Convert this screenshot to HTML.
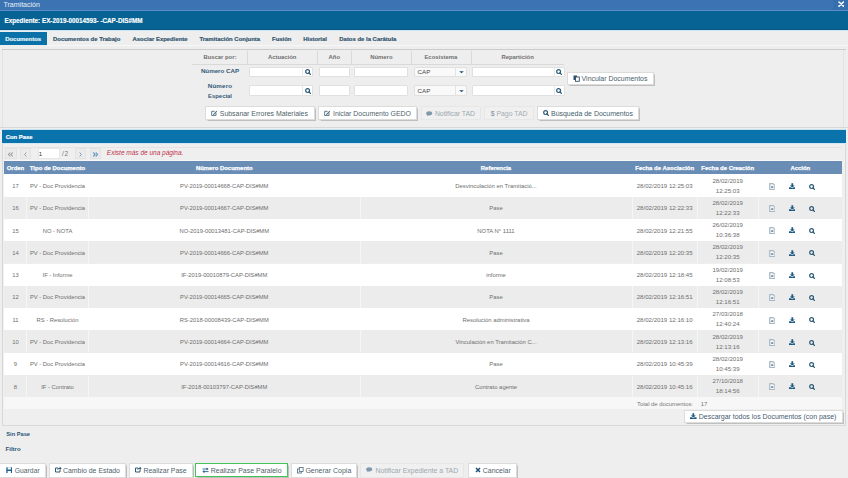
<!DOCTYPE html>
<html><head><meta charset="utf-8"><title>Tramitación</title>
<style>
*{margin:0;padding:0;box-sizing:border-box}
html,body{width:848px;height:478px;overflow:hidden}
body{background:#eeeeee;font-family:"Liberation Sans", sans-serif;position:relative}
.a{position:absolute}
.t{position:absolute;white-space:nowrap}
svg{display:block}
</style></head><body>
<div id="root" style="position:absolute;left:0;top:0;width:848px;height:478px;overflow:hidden">
<div class="a" style="left:0.00px;top:0.00px;width:848.00px;height:9.70px;background:#3b73b3"></div>
<div class="a" style="left:0.00px;top:9.70px;width:848.00px;height:1.20px;background:#5b8ec6"></div>
<div class="t" style="left:3.50px;top:-5.40px;width:600px;height:20px;line-height:20px;font-size:7px;color:#e8f0f8;text-align:left;">Tramitación</div>
<div class="a" style="left:833.00px;top:0.00px;width:15.00px;height:9.80px;background:#376ead"></div>
<svg class="a" style="left:837.60px;top:1.10px" width="6.5" height="6.2" viewBox="0 0 6.5 6.2"><path d="M1 1L5.5 5.2M5.5 1L1 5.2" stroke="#fff" stroke-width="1.6" stroke-linecap="round"/></svg>
<div class="a" style="left:0.00px;top:10.90px;width:848.00px;height:18.80px;background:#066394"></div>
<div class="a" style="left:0.00px;top:28.90px;width:848.00px;height:0.80px;background:#055683"></div>
<div class="a" style="left:0.00px;top:29.70px;width:848.00px;height:1.50px;background:#d3e8f4"></div>
<div class="t" style="left:4.50px;top:11.30px;width:600px;height:20px;line-height:20px;font-size:6.3px;color:#ffffff;text-align:left;font-weight:700;-webkit-text-stroke:0.15px #fff;">Expediente: EX-2019-00014593- -CAP-DIS#MM</div>
<div class="a" style="left:0.00px;top:32.00px;width:47.20px;height:13.00px;background:#0b72a9"></div>
<div class="t" style="left:5.20px;top:29.10px;width:600px;height:20px;line-height:20px;font-size:5.95px;color:#e6f2f8;text-align:left;font-weight:700;-webkit-text-stroke:0.2px #e6f2f8;">Documentos</div>
<div class="t" style="left:53.00px;top:29.10px;width:600px;height:20px;line-height:20px;font-size:5.95px;color:#33566e;text-align:left;font-weight:700;-webkit-text-stroke:0.2px #33566e;">Documentos de Trabajo</div>
<div class="t" style="left:132.50px;top:29.10px;width:600px;height:20px;line-height:20px;font-size:5.95px;color:#33566e;text-align:left;font-weight:700;-webkit-text-stroke:0.2px #33566e;">Asociar Expediente</div>
<div class="t" style="left:199.40px;top:29.10px;width:600px;height:20px;line-height:20px;font-size:5.95px;color:#33566e;text-align:left;font-weight:700;-webkit-text-stroke:0.2px #33566e;">Tramitación Conjunta</div>
<div class="t" style="left:272.00px;top:29.10px;width:600px;height:20px;line-height:20px;font-size:5.95px;color:#33566e;text-align:left;font-weight:700;-webkit-text-stroke:0.2px #33566e;">Fusión</div>
<div class="t" style="left:303.20px;top:29.10px;width:600px;height:20px;line-height:20px;font-size:5.95px;color:#33566e;text-align:left;font-weight:700;-webkit-text-stroke:0.2px #33566e;">Historial</div>
<div class="t" style="left:339.30px;top:29.10px;width:600px;height:20px;line-height:20px;font-size:5.95px;color:#33566e;text-align:left;font-weight:700;-webkit-text-stroke:0.2px #33566e;">Datos de la Carátula</div>
<div class="a" style="left:47.20px;top:44.50px;width:800.80px;height:0.80px;background:#f7f7f7"></div>
<div class="a" style="left:2.00px;top:48.60px;width:843.50px;height:1.20px;background:#cbcbcb"></div>
<div class="a" style="left:1.60px;top:49.80px;width:0.80px;height:77.50px;background:#e3e3e3"></div>
<div class="a" style="left:843.00px;top:49.80px;width:0.80px;height:77.50px;background:#e3e3e3"></div>
<div class="t" style="left:-80.10px;top:47.30px;width:600px;height:20px;line-height:20px;font-size:5.9px;color:#6f6f6f;text-align:center;font-weight:700;">Buscar por:</div>
<div class="t" style="left:-17.80px;top:47.30px;width:600px;height:20px;line-height:20px;font-size:5.9px;color:#6f6f6f;text-align:center;font-weight:700;">Actuación</div>
<div class="t" style="left:34.30px;top:47.30px;width:600px;height:20px;line-height:20px;font-size:5.9px;color:#6f6f6f;text-align:center;font-weight:700;">Año</div>
<div class="t" style="left:81.40px;top:47.30px;width:600px;height:20px;line-height:20px;font-size:5.9px;color:#6f6f6f;text-align:center;font-weight:700;">Número</div>
<div class="t" style="left:140.80px;top:47.30px;width:600px;height:20px;line-height:20px;font-size:5.9px;color:#6f6f6f;text-align:center;font-weight:700;">Ecosistema</div>
<div class="t" style="left:217.60px;top:47.30px;width:600px;height:20px;line-height:20px;font-size:5.9px;color:#6f6f6f;text-align:center;font-weight:700;">Repartición</div>
<div class="a" style="left:246.90px;top:50.50px;width:0.80px;height:13.50px;background:#d9d9d9"></div>
<div class="a" style="left:316.60px;top:50.50px;width:0.80px;height:13.50px;background:#d9d9d9"></div>
<div class="a" style="left:351.30px;top:50.50px;width:0.80px;height:13.50px;background:#d9d9d9"></div>
<div class="a" style="left:411.40px;top:50.50px;width:0.80px;height:13.50px;background:#d9d9d9"></div>
<div class="a" style="left:470.50px;top:50.50px;width:0.80px;height:13.50px;background:#d9d9d9"></div>
<div class="a" style="left:192.40px;top:63.60px;width:372.00px;height:0.80px;background:#d9d9d9"></div>
<div class="t" style="left:-80.00px;top:61.40px;width:600px;height:20px;line-height:20px;font-size:6.2px;color:#335a78;text-align:center;font-weight:700;">Número CAP</div>
<div class="t" style="left:-80.00px;top:75.90px;width:600px;height:20px;line-height:20px;font-size:6.25px;color:#335a78;text-align:center;font-weight:700;letter-spacing:0.15px;">Número</div>
<div class="t" style="left:-80.00px;top:85.90px;width:600px;height:20px;line-height:20px;font-size:5.9px;color:#335a78;text-align:center;font-weight:700;">Especial</div>
<div class="a" style="left:249.20px;top:66.60px;width:64.10px;height:10.70px;background:#fff;border:0.8px solid #e0e0e0;border-radius:1px"></div>
<div class="a" style="left:302.20px;top:66.90px;width:0.80px;height:10.10px;background:#e8e8e8"></div>
<svg class="a" style="left:304.80px;top:68.95px" width="6.5" height="6.5" viewBox="0 0 6.5 6.5"><circle cx="2.6" cy="2.6" r="1.9" fill="none" stroke="#2c5a76" stroke-width="1.2"/><path d="M4 4L5.4 5.4" stroke="#2c5a76" stroke-width="1.3" stroke-linecap="round"/></svg>
<div class="a" style="left:319.40px;top:66.60px;width:31.00px;height:10.70px;background:#fff;border:0.8px solid #e0e0e0;border-radius:1px"></div>
<div class="a" style="left:354.30px;top:66.60px;width:53.30px;height:10.70px;background:#fff;border:0.8px solid #e0e0e0;border-radius:1px"></div>
<div class="a" style="left:414.40px;top:66.60px;width:52.30px;height:10.70px;background:#f9f9f9;border:0.8px solid #e0e0e0;border-radius:1px"></div>
<div class="a" style="left:454.60px;top:66.90px;width:0.80px;height:10.10px;background:#e4e4e4"></div>
<div class="t" style="left:417.60px;top:61.95px;width:600px;height:20px;line-height:20px;font-size:6.2px;color:#444;text-align:left;">CAP</div>
<svg class="a" style="left:458.60px;top:70.95px" width="5" height="2.6" viewBox="0 0 5 2.6"><path d="M0.2 0.2H4.8L2.5 2.2Z" fill="#1f4f6e"/></svg>
<div class="a" style="left:472.20px;top:66.60px;width:92.40px;height:10.70px;background:#fff;border:0.8px solid #e0e0e0;border-radius:1px"></div>
<div class="a" style="left:553.50px;top:66.90px;width:0.80px;height:10.10px;background:#e8e8e8"></div>
<svg class="a" style="left:556.00px;top:68.95px" width="6.5" height="6.5" viewBox="0 0 6.5 6.5"><circle cx="2.6" cy="2.6" r="1.9" fill="none" stroke="#2c5a76" stroke-width="1.2"/><path d="M4 4L5.4 5.4" stroke="#2c5a76" stroke-width="1.3" stroke-linecap="round"/></svg>
<div class="a" style="left:249.20px;top:85.40px;width:64.10px;height:10.90px;background:#fff;border:0.8px solid #e0e0e0;border-radius:1px"></div>
<div class="a" style="left:302.20px;top:85.70px;width:0.80px;height:10.30px;background:#e8e8e8"></div>
<svg class="a" style="left:304.80px;top:87.85px" width="6.5" height="6.5" viewBox="0 0 6.5 6.5"><circle cx="2.6" cy="2.6" r="1.9" fill="none" stroke="#2c5a76" stroke-width="1.2"/><path d="M4 4L5.4 5.4" stroke="#2c5a76" stroke-width="1.3" stroke-linecap="round"/></svg>
<div class="a" style="left:319.40px;top:85.40px;width:31.00px;height:10.90px;background:#fff;border:0.8px solid #e0e0e0;border-radius:1px"></div>
<div class="a" style="left:354.30px;top:85.40px;width:53.30px;height:10.90px;background:#fff;border:0.8px solid #e0e0e0;border-radius:1px"></div>
<div class="a" style="left:414.40px;top:85.40px;width:52.30px;height:10.90px;background:#f9f9f9;border:0.8px solid #e0e0e0;border-radius:1px"></div>
<div class="a" style="left:454.60px;top:85.70px;width:0.80px;height:10.30px;background:#e4e4e4"></div>
<div class="t" style="left:417.60px;top:80.85px;width:600px;height:20px;line-height:20px;font-size:6.2px;color:#444;text-align:left;">CAP</div>
<svg class="a" style="left:458.60px;top:89.85px" width="5" height="2.6" viewBox="0 0 5 2.6"><path d="M0.2 0.2H4.8L2.5 2.2Z" fill="#1f4f6e"/></svg>
<div class="a" style="left:472.20px;top:85.40px;width:92.40px;height:10.90px;background:#fff;border:0.8px solid #e0e0e0;border-radius:1px"></div>
<div class="a" style="left:553.50px;top:85.70px;width:0.80px;height:10.30px;background:#e8e8e8"></div>
<svg class="a" style="left:556.00px;top:87.85px" width="6.5" height="6.5" viewBox="0 0 6.5 6.5"><circle cx="2.6" cy="2.6" r="1.9" fill="none" stroke="#2c5a76" stroke-width="1.2"/><path d="M4 4L5.4 5.4" stroke="#2c5a76" stroke-width="1.3" stroke-linecap="round"/></svg>
<div class="a" style="left:204.50px;top:106.40px;width:110.30px;height:14.00px;background:#fff;border:0.7px solid #dcdcdc;box-shadow:0.5px 0.8px 0.9px rgba(0,0,0,0.2)"></div>
<svg class="a" style="left:211.20px;top:110.30px" width="6.5" height="6" viewBox="0 0 6.5 6"><path d="M0.7 1.3H3.6M0.7 1.3V5.6H5V3" fill="none" stroke="#4a6a80" stroke-width="0.9"/><path d="M2.3 4L5.5 0.8L6.2 1.5L3 4.7L2.1 4.9Z" fill="#4a6a80"/></svg>
<div class="t" style="left:219.80px;top:104.00px;width:600px;height:20px;line-height:20px;font-size:6.93px;color:#4e5f6b;text-align:left;">Subsanar Errores Materiales</div>
<div class="a" style="left:317.50px;top:106.40px;width:99.80px;height:14.00px;background:#fff;border:0.7px solid #dcdcdc;box-shadow:0.5px 0.8px 0.9px rgba(0,0,0,0.2)"></div>
<svg class="a" style="left:323.50px;top:110.30px" width="6.5" height="6" viewBox="0 0 6.5 6"><path d="M0.7 1.3H3.6M0.7 1.3V5.6H5V3" fill="none" stroke="#4a6a80" stroke-width="0.9"/><path d="M2.3 4L5.5 0.8L6.2 1.5L3 4.7L2.1 4.9Z" fill="#4a6a80"/></svg>
<div class="t" style="left:333.00px;top:104.00px;width:600px;height:20px;line-height:20px;font-size:6.91px;color:#4e5f6b;text-align:left;">Iniciar Documento GEDO</div>
<div class="a" style="left:420.50px;top:106.40px;width:60.30px;height:14.00px;background:#f0f0f0;border:0.7px solid #e7e7e7"></div>
<svg class="a" style="left:426.00px;top:110.80px" width="6.5" height="5.5" viewBox="0 0 6.5 5.5"><ellipse cx="3.2" cy="2.3" rx="3" ry="2.1" fill="#7f98aa"/><path d="M0.8 5.3L1.8 3.4L3 4Z" fill="#7f98aa"/></svg>
<div class="t" style="left:434.90px;top:104.00px;width:600px;height:20px;line-height:20px;font-size:6.87px;color:#9ca8b0;text-align:left;">Notificar TAD</div>
<div class="a" style="left:484.20px;top:106.40px;width:49.50px;height:14.00px;background:#f0f0f0;border:0.7px solid #e7e7e7"></div>
<div class="t" style="left:490.70px;top:104.00px;width:600px;height:20px;line-height:20px;font-size:6.87px;color:#a2adb4;text-align:left;"><span style="color:#7d8c96">$</span> Pago TAD</div>
<div class="a" style="left:536.50px;top:106.40px;width:102.80px;height:14.00px;background:#fff;border:0.7px solid #dcdcdc;box-shadow:0.5px 0.8px 0.9px rgba(0,0,0,0.2)"></div>
<svg class="a" style="left:543.00px;top:110.20px" width="6.5" height="6.5" viewBox="0 0 6.5 6.5"><circle cx="2.6" cy="2.6" r="1.9" fill="none" stroke="#2c5a76" stroke-width="1.2"/><path d="M4 4L5.4 5.4" stroke="#2c5a76" stroke-width="1.3" stroke-linecap="round"/></svg>
<div class="t" style="left:551.00px;top:104.00px;width:600px;height:20px;line-height:20px;font-size:6.96px;color:#435d6d;text-align:left;">Búsqueda de Documentos</div>
<div class="a" style="left:566.50px;top:71.90px;width:87.10px;height:13.20px;background:#fff;border:0.7px solid #dcdcdc;box-shadow:0.5px 0.8px 0.9px rgba(0,0,0,0.2)"></div>
<svg class="a" style="left:572.70px;top:75.30px" width="7" height="6.5" viewBox="0 0 7 6.5"><rect x="0.5" y="0.5" width="3.5" height="4.5" fill="#2e4f69"/><rect x="2.5" y="2" width="3.8" height="4.3" fill="#fff" stroke="#2e4f69" stroke-width="0.9"/></svg>
<div class="t" style="left:581.60px;top:69.00px;width:600px;height:20px;line-height:20px;font-size:6.94px;color:#475d6c;text-align:left;">Vincular Documentos</div>
<div class="a" style="left:0.00px;top:127.30px;width:848.00px;height:1.00px;background:#d8d8d8"></div>
<div class="a" style="left:2.00px;top:128.60px;width:844.00px;height:1.00px;background:#c5e1ef"></div>
<div class="a" style="left:1.85px;top:129.60px;width:844.15px;height:13.00px;background:#0a73ab"></div>
<div class="t" style="left:5.70px;top:126.80px;width:600px;height:20px;line-height:20px;font-size:5.92px;color:#ffffff;text-align:left;font-weight:700;-webkit-text-stroke:0.2px #fff;">Con Pase</div>
<div class="a" style="left:1.85px;top:142.60px;width:844.15px;height:283.30px;background:#efefef;border:0.8px solid #d8d8d8;border-top:none"></div>
<div class="a" style="left:1.85px;top:142.60px;width:844.15px;height:1.20px;background:#d2e7f2"></div>
<div class="a" style="left:4.40px;top:146.60px;width:838.10px;height:0.80px;background:#e3e3e3"></div>
<div class="a" style="left:4.40px;top:160.20px;width:838.10px;height:0.90px;background:#f8f8f8"></div>
<div class="a" style="left:4.50px;top:147.90px;width:12.10px;height:11.20px;background:#ebebeb;border:0.6px solid #e2e2e2"></div>
<svg class="a" style="left:7.05px;top:150.50px" width="7" height="7" viewBox="0 0 7 7"><path d="M3.3 1.5L1.5 3.5L3.3 5.5M5.8 1.5L4 3.5L5.8 5.5" fill="none" stroke="#9a9a9a" stroke-width="1.1"/></svg>
<div class="a" style="left:19.50px;top:147.90px;width:11.60px;height:11.20px;background:#ebebeb;border:0.6px solid #e2e2e2"></div>
<svg class="a" style="left:21.80px;top:150.50px" width="7" height="7" viewBox="0 0 7 7"><path d="M4.3 1.5L2.6 3.5L4.3 5.5" fill="none" stroke="#a0a0a0" stroke-width="1.0"/></svg>
<div class="a" style="left:37.60px;top:147.90px;width:22.10px;height:11.20px;background:#fff;border:0.6px solid #e6e6e6"></div>
<div class="t" style="left:38.80px;top:143.70px;width:600px;height:20px;line-height:20px;font-size:6px;color:#333;text-align:left;">1</div>
<div class="t" style="left:61.90px;top:143.70px;width:600px;height:20px;line-height:20px;font-size:6.6px;color:#777;text-align:left;letter-spacing:0.8px;">/2</div>
<div class="a" style="left:74.60px;top:147.90px;width:11.60px;height:11.20px;background:#ebebeb;border:0.6px solid #e2e2e2"></div>
<svg class="a" style="left:76.90px;top:150.50px" width="7" height="7" viewBox="0 0 7 7"><path d="M2.7 1.5L4.4 3.5L2.7 5.5" fill="none" stroke="#7a9fc4" stroke-width="1.0"/></svg>
<div class="a" style="left:89.50px;top:147.90px;width:11.70px;height:11.20px;background:#ebebeb;border:0.6px solid #e2e2e2"></div>
<svg class="a" style="left:91.85px;top:150.50px" width="7" height="7" viewBox="0 0 7 7"><path d="M1.2 1.5L3 3.5L1.2 5.5M3.7 1.5L5.5 3.5L3.7 5.5" fill="none" stroke="#6f9ac8" stroke-width="1.2"/></svg>
<div class="t" style="left:106.80px;top:143.20px;width:600px;height:20px;line-height:20px;font-size:6.5px;color:#c2334d;text-align:left;font-style:italic;">Existe más de una página.</div>
<div class="a" style="left:4.40px;top:161.10px;width:838.10px;height:13.20px;background:#6a8db5"></div>
<div class="t" style="left:-284.55px;top:158.10px;width:600px;height:20px;line-height:20px;font-size:5.95px;color:#ffffff;text-align:center;font-weight:700;-webkit-text-stroke:0.25px #ffffff;">Orden</div>
<div class="t" style="left:-242.50px;top:158.10px;width:600px;height:20px;line-height:20px;font-size:5.95px;color:#ffffff;text-align:center;font-weight:700;-webkit-text-stroke:0.25px #ffffff;">Tipo de Documento</div>
<div class="t" style="left:-75.75px;top:158.10px;width:600px;height:20px;line-height:20px;font-size:5.95px;color:#ffffff;text-align:center;font-weight:700;-webkit-text-stroke:0.25px #ffffff;">Número Documento</div>
<div class="t" style="left:196.00px;top:158.10px;width:600px;height:20px;line-height:20px;font-size:5.95px;color:#ffffff;text-align:center;font-weight:700;-webkit-text-stroke:0.25px #ffffff;">Referencia</div>
<div class="t" style="left:364.70px;top:158.10px;width:600px;height:20px;line-height:20px;font-size:5.95px;color:#ffffff;text-align:center;font-weight:700;-webkit-text-stroke:0.25px #ffffff;">Fecha de Asociación</div>
<div class="t" style="left:427.70px;top:158.10px;width:600px;height:20px;line-height:20px;font-size:5.95px;color:#ffffff;text-align:center;font-weight:700;-webkit-text-stroke:0.25px #ffffff;">Fecha de Creación</div>
<div class="t" style="left:500.35px;top:158.10px;width:600px;height:20px;line-height:20px;font-size:5.95px;color:#ffffff;text-align:center;font-weight:700;-webkit-text-stroke:0.25px #ffffff;">Acción</div>
<div class="a" style="left:4.40px;top:174.30px;width:838.10px;height:22.30px;background:#ffffff"></div>
<div class="t" style="left:-284.55px;top:175.95px;width:600px;height:20px;line-height:20px;font-size:5.85px;color:#6e6e6e;text-align:center;">17</div>
<div class="t" style="left:-242.50px;top:175.95px;width:600px;height:20px;line-height:20px;font-size:5.8px;color:#6e6e6e;text-align:center;">PV - Doc Providencia</div>
<div class="t" style="left:-75.75px;top:175.95px;width:600px;height:20px;line-height:20px;font-size:5.8px;color:#6e6e6e;text-align:center;">PV-2019-00014668-CAP-DIS#MM</div>
<div class="t" style="left:196.00px;top:175.95px;width:600px;height:20px;line-height:20px;font-size:5.9px;color:#6e6e6e;text-align:center;">Desvinculación en Tramitació...</div>
<div class="t" style="left:364.70px;top:175.95px;width:600px;height:20px;line-height:20px;font-size:6.1px;color:#6e6e6e;text-align:center;">28/02/2019 12:25:03</div>
<div class="t" style="left:427.70px;top:170.55px;width:600px;height:20px;line-height:20px;font-size:6.1px;color:#6e6e6e;text-align:center;">28/02/2019</div>
<div class="t" style="left:427.70px;top:180.55px;width:600px;height:20px;line-height:20px;font-size:6.1px;color:#6e6e6e;text-align:center;">12:25:03</div>
<svg class="a" style="left:768.60px;top:182.75px" width="6.7" height="7.2" viewBox="0 0 6.7 7.2"><path d="M0.7 0.7H4.1L6 2.6V6.5H0.7Z" fill="#f4f7f9" stroke="#a7b8c4" stroke-width="1.2" stroke-linejoin="round"/><path d="M2.1 3.3H4.4V4.9H2.1Z" fill="#6f8a9c"/></svg>
<svg class="a" style="left:788.70px;top:182.75px" width="6.6" height="6" viewBox="0 0 6.6 6"><path d="M2.4 0.2H4.2V2.4H5.9L3.3 4.6L0.7 2.4H2.4Z" fill="#1d5a80"/><path d="M0 4.2H2L3.3 5.2L4.6 4.2H6.6V5.9H0Z" fill="#1d5a80"/></svg>
<svg class="a" style="left:809.20px;top:183.55px" width="6.5" height="6.5" viewBox="0 0 6.5 6.5"><circle cx="2.6" cy="2.6" r="1.9" fill="none" stroke="#2c5a76" stroke-width="1.2"/><path d="M4 4L5.4 5.4" stroke="#2c5a76" stroke-width="1.3" stroke-linecap="round"/></svg>
<div class="a" style="left:4.40px;top:196.60px;width:838.10px;height:22.30px;background:#ececec"></div>
<div class="a" style="left:26.20px;top:196.60px;width:0.60px;height:22.30px;background:#f6f6f6"></div>
<div class="a" style="left:88.20px;top:196.60px;width:0.60px;height:22.30px;background:#f6f6f6"></div>
<div class="a" style="left:359.70px;top:196.60px;width:0.60px;height:22.30px;background:#f6f6f6"></div>
<div class="a" style="left:631.70px;top:196.60px;width:0.60px;height:22.30px;background:#f6f6f6"></div>
<div class="a" style="left:697.10px;top:196.60px;width:0.60px;height:22.30px;background:#f6f6f6"></div>
<div class="a" style="left:757.70px;top:196.60px;width:0.60px;height:22.30px;background:#f6f6f6"></div>
<div class="t" style="left:-284.55px;top:198.25px;width:600px;height:20px;line-height:20px;font-size:5.85px;color:#6e6e6e;text-align:center;">16</div>
<div class="t" style="left:-242.50px;top:198.25px;width:600px;height:20px;line-height:20px;font-size:5.8px;color:#6e6e6e;text-align:center;">PV - Doc Providencia</div>
<div class="t" style="left:-75.75px;top:198.25px;width:600px;height:20px;line-height:20px;font-size:5.8px;color:#6e6e6e;text-align:center;">PV-2019-00014667-CAP-DIS#MM</div>
<div class="t" style="left:196.00px;top:198.25px;width:600px;height:20px;line-height:20px;font-size:5.9px;color:#6e6e6e;text-align:center;">Pase</div>
<div class="t" style="left:364.70px;top:198.25px;width:600px;height:20px;line-height:20px;font-size:6.1px;color:#6e6e6e;text-align:center;">28/02/2019 12:22:33</div>
<div class="t" style="left:427.70px;top:192.85px;width:600px;height:20px;line-height:20px;font-size:6.1px;color:#6e6e6e;text-align:center;">28/02/2019</div>
<div class="t" style="left:427.70px;top:202.85px;width:600px;height:20px;line-height:20px;font-size:6.1px;color:#6e6e6e;text-align:center;">12:22:33</div>
<svg class="a" style="left:768.60px;top:205.05px" width="6.7" height="7.2" viewBox="0 0 6.7 7.2"><path d="M0.7 0.7H4.1L6 2.6V6.5H0.7Z" fill="#f4f7f9" stroke="#a7b8c4" stroke-width="1.2" stroke-linejoin="round"/><path d="M2.1 3.3H4.4V4.9H2.1Z" fill="#6f8a9c"/></svg>
<svg class="a" style="left:788.70px;top:205.05px" width="6.6" height="6" viewBox="0 0 6.6 6"><path d="M2.4 0.2H4.2V2.4H5.9L3.3 4.6L0.7 2.4H2.4Z" fill="#1d5a80"/><path d="M0 4.2H2L3.3 5.2L4.6 4.2H6.6V5.9H0Z" fill="#1d5a80"/></svg>
<svg class="a" style="left:809.20px;top:205.85px" width="6.5" height="6.5" viewBox="0 0 6.5 6.5"><circle cx="2.6" cy="2.6" r="1.9" fill="none" stroke="#2c5a76" stroke-width="1.2"/><path d="M4 4L5.4 5.4" stroke="#2c5a76" stroke-width="1.3" stroke-linecap="round"/></svg>
<div class="a" style="left:4.40px;top:218.90px;width:838.10px;height:22.30px;background:#ffffff"></div>
<div class="t" style="left:-284.55px;top:220.55px;width:600px;height:20px;line-height:20px;font-size:5.85px;color:#6e6e6e;text-align:center;">15</div>
<div class="t" style="left:-242.50px;top:220.55px;width:600px;height:20px;line-height:20px;font-size:5.8px;color:#6e6e6e;text-align:center;">NO - NOTA</div>
<div class="t" style="left:-75.75px;top:220.55px;width:600px;height:20px;line-height:20px;font-size:5.8px;color:#6e6e6e;text-align:center;">NO-2019-00013481-CAP-DIS#MM</div>
<div class="t" style="left:196.00px;top:220.55px;width:600px;height:20px;line-height:20px;font-size:5.9px;color:#6e6e6e;text-align:center;">NOTA N° 1111</div>
<div class="t" style="left:364.70px;top:220.55px;width:600px;height:20px;line-height:20px;font-size:6.1px;color:#6e6e6e;text-align:center;">28/02/2019 12:21:55</div>
<div class="t" style="left:427.70px;top:215.15px;width:600px;height:20px;line-height:20px;font-size:6.1px;color:#6e6e6e;text-align:center;">26/02/2019</div>
<div class="t" style="left:427.70px;top:225.15px;width:600px;height:20px;line-height:20px;font-size:6.1px;color:#6e6e6e;text-align:center;">10:36:38</div>
<svg class="a" style="left:768.60px;top:227.35px" width="6.7" height="7.2" viewBox="0 0 6.7 7.2"><path d="M0.7 0.7H4.1L6 2.6V6.5H0.7Z" fill="#f4f7f9" stroke="#a7b8c4" stroke-width="1.2" stroke-linejoin="round"/><path d="M2.1 3.3H4.4V4.9H2.1Z" fill="#6f8a9c"/></svg>
<svg class="a" style="left:788.70px;top:227.35px" width="6.6" height="6" viewBox="0 0 6.6 6"><path d="M2.4 0.2H4.2V2.4H5.9L3.3 4.6L0.7 2.4H2.4Z" fill="#1d5a80"/><path d="M0 4.2H2L3.3 5.2L4.6 4.2H6.6V5.9H0Z" fill="#1d5a80"/></svg>
<svg class="a" style="left:809.20px;top:228.15px" width="6.5" height="6.5" viewBox="0 0 6.5 6.5"><circle cx="2.6" cy="2.6" r="1.9" fill="none" stroke="#2c5a76" stroke-width="1.2"/><path d="M4 4L5.4 5.4" stroke="#2c5a76" stroke-width="1.3" stroke-linecap="round"/></svg>
<div class="a" style="left:4.40px;top:241.20px;width:838.10px;height:22.30px;background:#ececec"></div>
<div class="a" style="left:26.20px;top:241.20px;width:0.60px;height:22.30px;background:#f6f6f6"></div>
<div class="a" style="left:88.20px;top:241.20px;width:0.60px;height:22.30px;background:#f6f6f6"></div>
<div class="a" style="left:359.70px;top:241.20px;width:0.60px;height:22.30px;background:#f6f6f6"></div>
<div class="a" style="left:631.70px;top:241.20px;width:0.60px;height:22.30px;background:#f6f6f6"></div>
<div class="a" style="left:697.10px;top:241.20px;width:0.60px;height:22.30px;background:#f6f6f6"></div>
<div class="a" style="left:757.70px;top:241.20px;width:0.60px;height:22.30px;background:#f6f6f6"></div>
<div class="t" style="left:-284.55px;top:242.85px;width:600px;height:20px;line-height:20px;font-size:5.85px;color:#6e6e6e;text-align:center;">14</div>
<div class="t" style="left:-242.50px;top:242.85px;width:600px;height:20px;line-height:20px;font-size:5.8px;color:#6e6e6e;text-align:center;">PV - Doc Providencia</div>
<div class="t" style="left:-75.75px;top:242.85px;width:600px;height:20px;line-height:20px;font-size:5.8px;color:#6e6e6e;text-align:center;">PV-2019-00014666-CAP-DIS#MM</div>
<div class="t" style="left:196.00px;top:242.85px;width:600px;height:20px;line-height:20px;font-size:5.9px;color:#6e6e6e;text-align:center;">Pase</div>
<div class="t" style="left:364.70px;top:242.85px;width:600px;height:20px;line-height:20px;font-size:6.1px;color:#6e6e6e;text-align:center;">28/02/2019 12:20:35</div>
<div class="t" style="left:427.70px;top:237.45px;width:600px;height:20px;line-height:20px;font-size:6.1px;color:#6e6e6e;text-align:center;">28/02/2019</div>
<div class="t" style="left:427.70px;top:247.45px;width:600px;height:20px;line-height:20px;font-size:6.1px;color:#6e6e6e;text-align:center;">12:20:35</div>
<svg class="a" style="left:768.60px;top:249.65px" width="6.7" height="7.2" viewBox="0 0 6.7 7.2"><path d="M0.7 0.7H4.1L6 2.6V6.5H0.7Z" fill="#f4f7f9" stroke="#a7b8c4" stroke-width="1.2" stroke-linejoin="round"/><path d="M2.1 3.3H4.4V4.9H2.1Z" fill="#6f8a9c"/></svg>
<svg class="a" style="left:788.70px;top:249.65px" width="6.6" height="6" viewBox="0 0 6.6 6"><path d="M2.4 0.2H4.2V2.4H5.9L3.3 4.6L0.7 2.4H2.4Z" fill="#1d5a80"/><path d="M0 4.2H2L3.3 5.2L4.6 4.2H6.6V5.9H0Z" fill="#1d5a80"/></svg>
<svg class="a" style="left:809.20px;top:250.45px" width="6.5" height="6.5" viewBox="0 0 6.5 6.5"><circle cx="2.6" cy="2.6" r="1.9" fill="none" stroke="#2c5a76" stroke-width="1.2"/><path d="M4 4L5.4 5.4" stroke="#2c5a76" stroke-width="1.3" stroke-linecap="round"/></svg>
<div class="a" style="left:4.40px;top:263.50px;width:838.10px;height:22.30px;background:#ffffff"></div>
<div class="t" style="left:-284.55px;top:265.15px;width:600px;height:20px;line-height:20px;font-size:5.85px;color:#6e6e6e;text-align:center;">13</div>
<div class="t" style="left:-242.50px;top:265.15px;width:600px;height:20px;line-height:20px;font-size:5.8px;color:#6e6e6e;text-align:center;">IF - Informe</div>
<div class="t" style="left:-75.75px;top:265.15px;width:600px;height:20px;line-height:20px;font-size:5.8px;color:#6e6e6e;text-align:center;">IF-2019-00010879-CAP-DIS#MM</div>
<div class="t" style="left:196.00px;top:265.15px;width:600px;height:20px;line-height:20px;font-size:5.9px;color:#6e6e6e;text-align:center;">informe</div>
<div class="t" style="left:364.70px;top:265.15px;width:600px;height:20px;line-height:20px;font-size:6.1px;color:#6e6e6e;text-align:center;">28/02/2019 12:18:45</div>
<div class="t" style="left:427.70px;top:259.75px;width:600px;height:20px;line-height:20px;font-size:6.1px;color:#6e6e6e;text-align:center;">19/02/2019</div>
<div class="t" style="left:427.70px;top:269.75px;width:600px;height:20px;line-height:20px;font-size:6.1px;color:#6e6e6e;text-align:center;">12:08:53</div>
<svg class="a" style="left:768.60px;top:271.95px" width="6.7" height="7.2" viewBox="0 0 6.7 7.2"><path d="M0.7 0.7H4.1L6 2.6V6.5H0.7Z" fill="#f4f7f9" stroke="#a7b8c4" stroke-width="1.2" stroke-linejoin="round"/><path d="M2.1 3.3H4.4V4.9H2.1Z" fill="#6f8a9c"/></svg>
<svg class="a" style="left:788.70px;top:271.95px" width="6.6" height="6" viewBox="0 0 6.6 6"><path d="M2.4 0.2H4.2V2.4H5.9L3.3 4.6L0.7 2.4H2.4Z" fill="#1d5a80"/><path d="M0 4.2H2L3.3 5.2L4.6 4.2H6.6V5.9H0Z" fill="#1d5a80"/></svg>
<svg class="a" style="left:809.20px;top:272.75px" width="6.5" height="6.5" viewBox="0 0 6.5 6.5"><circle cx="2.6" cy="2.6" r="1.9" fill="none" stroke="#2c5a76" stroke-width="1.2"/><path d="M4 4L5.4 5.4" stroke="#2c5a76" stroke-width="1.3" stroke-linecap="round"/></svg>
<div class="a" style="left:4.40px;top:285.80px;width:838.10px;height:22.30px;background:#ececec"></div>
<div class="a" style="left:26.20px;top:285.80px;width:0.60px;height:22.30px;background:#f6f6f6"></div>
<div class="a" style="left:88.20px;top:285.80px;width:0.60px;height:22.30px;background:#f6f6f6"></div>
<div class="a" style="left:359.70px;top:285.80px;width:0.60px;height:22.30px;background:#f6f6f6"></div>
<div class="a" style="left:631.70px;top:285.80px;width:0.60px;height:22.30px;background:#f6f6f6"></div>
<div class="a" style="left:697.10px;top:285.80px;width:0.60px;height:22.30px;background:#f6f6f6"></div>
<div class="a" style="left:757.70px;top:285.80px;width:0.60px;height:22.30px;background:#f6f6f6"></div>
<div class="t" style="left:-284.55px;top:287.45px;width:600px;height:20px;line-height:20px;font-size:5.85px;color:#6e6e6e;text-align:center;">12</div>
<div class="t" style="left:-242.50px;top:287.45px;width:600px;height:20px;line-height:20px;font-size:5.8px;color:#6e6e6e;text-align:center;">PV - Doc Providencia</div>
<div class="t" style="left:-75.75px;top:287.45px;width:600px;height:20px;line-height:20px;font-size:5.8px;color:#6e6e6e;text-align:center;">PV-2019-00014665-CAP-DIS#MM</div>
<div class="t" style="left:196.00px;top:287.45px;width:600px;height:20px;line-height:20px;font-size:5.9px;color:#6e6e6e;text-align:center;">Pase</div>
<div class="t" style="left:364.70px;top:287.45px;width:600px;height:20px;line-height:20px;font-size:6.1px;color:#6e6e6e;text-align:center;">28/02/2019 12:16:51</div>
<div class="t" style="left:427.70px;top:282.05px;width:600px;height:20px;line-height:20px;font-size:6.1px;color:#6e6e6e;text-align:center;">28/02/2019</div>
<div class="t" style="left:427.70px;top:292.05px;width:600px;height:20px;line-height:20px;font-size:6.1px;color:#6e6e6e;text-align:center;">12:16:51</div>
<svg class="a" style="left:768.60px;top:294.25px" width="6.7" height="7.2" viewBox="0 0 6.7 7.2"><path d="M0.7 0.7H4.1L6 2.6V6.5H0.7Z" fill="#f4f7f9" stroke="#a7b8c4" stroke-width="1.2" stroke-linejoin="round"/><path d="M2.1 3.3H4.4V4.9H2.1Z" fill="#6f8a9c"/></svg>
<svg class="a" style="left:788.70px;top:294.25px" width="6.6" height="6" viewBox="0 0 6.6 6"><path d="M2.4 0.2H4.2V2.4H5.9L3.3 4.6L0.7 2.4H2.4Z" fill="#1d5a80"/><path d="M0 4.2H2L3.3 5.2L4.6 4.2H6.6V5.9H0Z" fill="#1d5a80"/></svg>
<svg class="a" style="left:809.20px;top:295.05px" width="6.5" height="6.5" viewBox="0 0 6.5 6.5"><circle cx="2.6" cy="2.6" r="1.9" fill="none" stroke="#2c5a76" stroke-width="1.2"/><path d="M4 4L5.4 5.4" stroke="#2c5a76" stroke-width="1.3" stroke-linecap="round"/></svg>
<div class="a" style="left:4.40px;top:308.10px;width:838.10px;height:22.30px;background:#ffffff"></div>
<div class="t" style="left:-284.55px;top:309.75px;width:600px;height:20px;line-height:20px;font-size:5.85px;color:#6e6e6e;text-align:center;">11</div>
<div class="t" style="left:-242.50px;top:309.75px;width:600px;height:20px;line-height:20px;font-size:5.8px;color:#6e6e6e;text-align:center;">RS - Resolución</div>
<div class="t" style="left:-75.75px;top:309.75px;width:600px;height:20px;line-height:20px;font-size:5.8px;color:#6e6e6e;text-align:center;">RS-2018-00008439-CAP-DIS#MM</div>
<div class="t" style="left:196.00px;top:309.75px;width:600px;height:20px;line-height:20px;font-size:5.9px;color:#6e6e6e;text-align:center;">Resolución administrativa</div>
<div class="t" style="left:364.70px;top:309.75px;width:600px;height:20px;line-height:20px;font-size:6.1px;color:#6e6e6e;text-align:center;">28/02/2019 12:16:10</div>
<div class="t" style="left:427.70px;top:304.35px;width:600px;height:20px;line-height:20px;font-size:6.1px;color:#6e6e6e;text-align:center;">27/03/2018</div>
<div class="t" style="left:427.70px;top:314.35px;width:600px;height:20px;line-height:20px;font-size:6.1px;color:#6e6e6e;text-align:center;">12:40:24</div>
<svg class="a" style="left:768.60px;top:316.55px" width="6.7" height="7.2" viewBox="0 0 6.7 7.2"><path d="M0.7 0.7H4.1L6 2.6V6.5H0.7Z" fill="#f4f7f9" stroke="#a7b8c4" stroke-width="1.2" stroke-linejoin="round"/><path d="M2.1 3.3H4.4V4.9H2.1Z" fill="#6f8a9c"/></svg>
<svg class="a" style="left:788.70px;top:316.55px" width="6.6" height="6" viewBox="0 0 6.6 6"><path d="M2.4 0.2H4.2V2.4H5.9L3.3 4.6L0.7 2.4H2.4Z" fill="#1d5a80"/><path d="M0 4.2H2L3.3 5.2L4.6 4.2H6.6V5.9H0Z" fill="#1d5a80"/></svg>
<svg class="a" style="left:809.20px;top:317.35px" width="6.5" height="6.5" viewBox="0 0 6.5 6.5"><circle cx="2.6" cy="2.6" r="1.9" fill="none" stroke="#2c5a76" stroke-width="1.2"/><path d="M4 4L5.4 5.4" stroke="#2c5a76" stroke-width="1.3" stroke-linecap="round"/></svg>
<div class="a" style="left:4.40px;top:330.40px;width:838.10px;height:22.30px;background:#ececec"></div>
<div class="a" style="left:26.20px;top:330.40px;width:0.60px;height:22.30px;background:#f6f6f6"></div>
<div class="a" style="left:88.20px;top:330.40px;width:0.60px;height:22.30px;background:#f6f6f6"></div>
<div class="a" style="left:359.70px;top:330.40px;width:0.60px;height:22.30px;background:#f6f6f6"></div>
<div class="a" style="left:631.70px;top:330.40px;width:0.60px;height:22.30px;background:#f6f6f6"></div>
<div class="a" style="left:697.10px;top:330.40px;width:0.60px;height:22.30px;background:#f6f6f6"></div>
<div class="a" style="left:757.70px;top:330.40px;width:0.60px;height:22.30px;background:#f6f6f6"></div>
<div class="t" style="left:-284.55px;top:332.05px;width:600px;height:20px;line-height:20px;font-size:5.85px;color:#6e6e6e;text-align:center;">10</div>
<div class="t" style="left:-242.50px;top:332.05px;width:600px;height:20px;line-height:20px;font-size:5.8px;color:#6e6e6e;text-align:center;">PV - Doc Providencia</div>
<div class="t" style="left:-75.75px;top:332.05px;width:600px;height:20px;line-height:20px;font-size:5.8px;color:#6e6e6e;text-align:center;">PV-2019-00014664-CAP-DIS#MM</div>
<div class="t" style="left:196.00px;top:332.05px;width:600px;height:20px;line-height:20px;font-size:5.9px;color:#6e6e6e;text-align:center;">Vinculación en Tramitación C...</div>
<div class="t" style="left:364.70px;top:332.05px;width:600px;height:20px;line-height:20px;font-size:6.1px;color:#6e6e6e;text-align:center;">28/02/2019 12:13:16</div>
<div class="t" style="left:427.70px;top:326.65px;width:600px;height:20px;line-height:20px;font-size:6.1px;color:#6e6e6e;text-align:center;">28/02/2019</div>
<div class="t" style="left:427.70px;top:336.65px;width:600px;height:20px;line-height:20px;font-size:6.1px;color:#6e6e6e;text-align:center;">12:13:16</div>
<svg class="a" style="left:768.60px;top:338.85px" width="6.7" height="7.2" viewBox="0 0 6.7 7.2"><path d="M0.7 0.7H4.1L6 2.6V6.5H0.7Z" fill="#f4f7f9" stroke="#a7b8c4" stroke-width="1.2" stroke-linejoin="round"/><path d="M2.1 3.3H4.4V4.9H2.1Z" fill="#6f8a9c"/></svg>
<svg class="a" style="left:788.70px;top:338.85px" width="6.6" height="6" viewBox="0 0 6.6 6"><path d="M2.4 0.2H4.2V2.4H5.9L3.3 4.6L0.7 2.4H2.4Z" fill="#1d5a80"/><path d="M0 4.2H2L3.3 5.2L4.6 4.2H6.6V5.9H0Z" fill="#1d5a80"/></svg>
<svg class="a" style="left:809.20px;top:339.65px" width="6.5" height="6.5" viewBox="0 0 6.5 6.5"><circle cx="2.6" cy="2.6" r="1.9" fill="none" stroke="#2c5a76" stroke-width="1.2"/><path d="M4 4L5.4 5.4" stroke="#2c5a76" stroke-width="1.3" stroke-linecap="round"/></svg>
<div class="a" style="left:4.40px;top:352.70px;width:838.10px;height:22.30px;background:#ffffff"></div>
<div class="t" style="left:-284.55px;top:354.35px;width:600px;height:20px;line-height:20px;font-size:5.85px;color:#6e6e6e;text-align:center;">9</div>
<div class="t" style="left:-242.50px;top:354.35px;width:600px;height:20px;line-height:20px;font-size:5.8px;color:#6e6e6e;text-align:center;">PV - Doc Providencia</div>
<div class="t" style="left:-75.75px;top:354.35px;width:600px;height:20px;line-height:20px;font-size:5.8px;color:#6e6e6e;text-align:center;">PV-2019-00014616-CAP-DIS#MM</div>
<div class="t" style="left:196.00px;top:354.35px;width:600px;height:20px;line-height:20px;font-size:5.9px;color:#6e6e6e;text-align:center;">Pase</div>
<div class="t" style="left:364.70px;top:354.35px;width:600px;height:20px;line-height:20px;font-size:6.1px;color:#6e6e6e;text-align:center;">28/02/2019 10:45:39</div>
<div class="t" style="left:427.70px;top:348.95px;width:600px;height:20px;line-height:20px;font-size:6.1px;color:#6e6e6e;text-align:center;">28/02/2019</div>
<div class="t" style="left:427.70px;top:358.95px;width:600px;height:20px;line-height:20px;font-size:6.1px;color:#6e6e6e;text-align:center;">10:45:39</div>
<svg class="a" style="left:768.60px;top:361.15px" width="6.7" height="7.2" viewBox="0 0 6.7 7.2"><path d="M0.7 0.7H4.1L6 2.6V6.5H0.7Z" fill="#f4f7f9" stroke="#a7b8c4" stroke-width="1.2" stroke-linejoin="round"/><path d="M2.1 3.3H4.4V4.9H2.1Z" fill="#6f8a9c"/></svg>
<svg class="a" style="left:788.70px;top:361.15px" width="6.6" height="6" viewBox="0 0 6.6 6"><path d="M2.4 0.2H4.2V2.4H5.9L3.3 4.6L0.7 2.4H2.4Z" fill="#1d5a80"/><path d="M0 4.2H2L3.3 5.2L4.6 4.2H6.6V5.9H0Z" fill="#1d5a80"/></svg>
<svg class="a" style="left:809.20px;top:361.95px" width="6.5" height="6.5" viewBox="0 0 6.5 6.5"><circle cx="2.6" cy="2.6" r="1.9" fill="none" stroke="#2c5a76" stroke-width="1.2"/><path d="M4 4L5.4 5.4" stroke="#2c5a76" stroke-width="1.3" stroke-linecap="round"/></svg>
<div class="a" style="left:4.40px;top:375.00px;width:838.10px;height:22.30px;background:#ececec"></div>
<div class="a" style="left:26.20px;top:375.00px;width:0.60px;height:22.30px;background:#f6f6f6"></div>
<div class="a" style="left:88.20px;top:375.00px;width:0.60px;height:22.30px;background:#f6f6f6"></div>
<div class="a" style="left:359.70px;top:375.00px;width:0.60px;height:22.30px;background:#f6f6f6"></div>
<div class="a" style="left:631.70px;top:375.00px;width:0.60px;height:22.30px;background:#f6f6f6"></div>
<div class="a" style="left:697.10px;top:375.00px;width:0.60px;height:22.30px;background:#f6f6f6"></div>
<div class="a" style="left:757.70px;top:375.00px;width:0.60px;height:22.30px;background:#f6f6f6"></div>
<div class="t" style="left:-284.55px;top:376.65px;width:600px;height:20px;line-height:20px;font-size:5.85px;color:#6e6e6e;text-align:center;">8</div>
<div class="t" style="left:-242.50px;top:376.65px;width:600px;height:20px;line-height:20px;font-size:5.8px;color:#6e6e6e;text-align:center;">IF - Contrato</div>
<div class="t" style="left:-75.75px;top:376.65px;width:600px;height:20px;line-height:20px;font-size:5.8px;color:#6e6e6e;text-align:center;">IF-2018-00103797-CAP-DIS#MM</div>
<div class="t" style="left:196.00px;top:376.65px;width:600px;height:20px;line-height:20px;font-size:5.9px;color:#6e6e6e;text-align:center;">Contrato agente</div>
<div class="t" style="left:364.70px;top:376.65px;width:600px;height:20px;line-height:20px;font-size:6.1px;color:#6e6e6e;text-align:center;">28/02/2019 10:45:16</div>
<div class="t" style="left:427.70px;top:371.25px;width:600px;height:20px;line-height:20px;font-size:6.1px;color:#6e6e6e;text-align:center;">27/10/2018</div>
<div class="t" style="left:427.70px;top:381.25px;width:600px;height:20px;line-height:20px;font-size:6.1px;color:#6e6e6e;text-align:center;">18:14:56</div>
<svg class="a" style="left:768.60px;top:383.45px" width="6.7" height="7.2" viewBox="0 0 6.7 7.2"><path d="M0.7 0.7H4.1L6 2.6V6.5H0.7Z" fill="#f4f7f9" stroke="#a7b8c4" stroke-width="1.2" stroke-linejoin="round"/><path d="M2.1 3.3H4.4V4.9H2.1Z" fill="#6f8a9c"/></svg>
<svg class="a" style="left:788.70px;top:383.45px" width="6.6" height="6" viewBox="0 0 6.6 6"><path d="M2.4 0.2H4.2V2.4H5.9L3.3 4.6L0.7 2.4H2.4Z" fill="#1d5a80"/><path d="M0 4.2H2L3.3 5.2L4.6 4.2H6.6V5.9H0Z" fill="#1d5a80"/></svg>
<svg class="a" style="left:809.20px;top:384.25px" width="6.5" height="6.5" viewBox="0 0 6.5 6.5"><circle cx="2.6" cy="2.6" r="1.9" fill="none" stroke="#2c5a76" stroke-width="1.2"/><path d="M4 4L5.4 5.4" stroke="#2c5a76" stroke-width="1.3" stroke-linecap="round"/></svg>
<div class="a" style="left:4.40px;top:397.30px;width:838.10px;height:12.10px;background:#f7f7f7"></div>
<div class="t" style="left:637.00px;top:394.00px;width:600px;height:20px;line-height:20px;font-size:5.9px;color:#777;text-align:left;">Total de documentos:</div>
<div class="t" style="left:700.70px;top:394.00px;width:600px;height:20px;line-height:20px;font-size:5.9px;color:#777;text-align:left;">17</div>
<div class="a" style="left:683.70px;top:409.70px;width:158.90px;height:13.50px;background:#fff;border:0.7px solid #dcdcdc;box-shadow:0.5px 0.8px 0.9px rgba(0,0,0,0.2)"></div>
<svg class="a" style="left:690.00px;top:413.30px" width="7" height="6.5" viewBox="0 0 7 6.5"><path d="M2.4 0.2H4.2V2.4H5.9L3.3 4.6L0.7 2.4H2.4Z" fill="#1d5a80"/><path d="M0 4.2H2L3.3 5.2L4.6 4.2H6.6V5.9H0Z" fill="#1d5a80"/></svg>
<div class="t" style="left:698.80px;top:407.20px;width:600px;height:20px;line-height:20px;font-size:6.96px;color:#3f5b70;text-align:left;">Descargar todos los Documentos (con pase)</div>
<div class="t" style="left:6.30px;top:424.40px;width:600px;height:20px;line-height:20px;font-size:5.7px;color:#2d5475;text-align:left;font-weight:700;">Sin Pase</div>
<div class="t" style="left:5.60px;top:439.30px;width:600px;height:20px;line-height:20px;font-size:6.0px;color:#2d5475;text-align:left;font-weight:700;">Filtro</div>
<div class="a" style="left:-2.00px;top:462.80px;width:48.20px;height:14.80px;background:#fff;border:0.7px solid #dcdcdc;box-shadow:0.5px 0.8px 0.9px rgba(0,0,0,0.2)"></div>
<svg class="a" style="left:5.70px;top:466.80px" width="6.5" height="6.5" viewBox="0 0 6.5 6.5"><path d="M0.3 0.3H6.2V6.2H0.3Z" fill="#1f5f8a"/><rect x="1.6" y="0.3" width="3.3" height="2.2" fill="#fff"/><rect x="1.6" y="4" width="3.3" height="2.2" fill="#fff"/></svg>
<div class="t" style="left:14.80px;top:460.80px;width:600px;height:20px;line-height:20px;font-size:6.79px;color:#4e5f6b;text-align:left;">Guardar</div>
<div class="a" style="left:48.80px;top:462.80px;width:77.50px;height:14.80px;background:#fff;border:0.7px solid #dcdcdc;box-shadow:0.5px 0.8px 0.9px rgba(0,0,0,0.2)"></div>
<svg class="a" style="left:54.80px;top:466.20px" width="7" height="6.5" viewBox="0 0 7 6.5"><path d="M0.5 2H3M0.5 2V6H5V4" fill="none" stroke="#2f5a74" stroke-width="1"/><path d="M2.2 4.2C2.5 2.5 3.5 1.8 4.8 1.8V0.6L6.6 2.4L4.8 4.2V3C3.7 3 2.8 3.4 2.2 4.2Z" fill="#2f5a74"/></svg>
<div class="t" style="left:63.00px;top:460.80px;width:600px;height:20px;line-height:20px;font-size:6.93px;color:#4e5f6b;text-align:left;">Cambio de Estado</div>
<div class="a" style="left:128.90px;top:462.80px;width:64.40px;height:14.80px;background:#fff;border:0.7px solid #dcdcdc;box-shadow:0.5px 0.8px 0.9px rgba(0,0,0,0.2)"></div>
<svg class="a" style="left:135.20px;top:466.20px" width="7" height="6.5" viewBox="0 0 7 6.5"><path d="M0.5 2H3M0.5 2V6H5V4" fill="none" stroke="#2f5a74" stroke-width="1"/><path d="M2.2 4.2C2.5 2.5 3.5 1.8 4.8 1.8V0.6L6.6 2.4L4.8 4.2V3C3.7 3 2.8 3.4 2.2 4.2Z" fill="#2f5a74"/></svg>
<div class="t" style="left:143.50px;top:460.80px;width:600px;height:20px;line-height:20px;font-size:6.95px;color:#4e5f6b;text-align:left;">Realizar Pase</div>
<div class="a" style="left:195.40px;top:463.30px;width:93.00px;height:14.20px;background:#fff;border:0.7px solid #dcdcdc;box-shadow:0.5px 0.8px 0.9px rgba(0,0,0,0.2);border:1.9px solid #45c35a"></div>
<svg class="a" style="left:202.20px;top:467.00px" width="7" height="6.5" viewBox="0 0 7 6.5"><path d="M0.5 2H5.5" stroke="#1f5f8a" stroke-width="0.9"/><path d="M4.6 0.4L6.6 2L4.6 3.6Z" fill="#1f5f8a"/><path d="M1.5 4.6H6.5" stroke="#1f5f8a" stroke-width="0.9"/><path d="M2.4 3L0.4 4.6L2.4 6.2Z" fill="#1f5f8a"/></svg>
<div class="t" style="left:210.80px;top:460.80px;width:600px;height:20px;line-height:20px;font-size:6.96px;color:#4e5f6b;text-align:left;">Realizar Pase Paralelo</div>
<div class="a" style="left:291.20px;top:462.80px;width:65.60px;height:14.80px;background:#fff;border:0.7px solid #dcdcdc;box-shadow:0.5px 0.8px 0.9px rgba(0,0,0,0.2)"></div>
<svg class="a" style="left:296.90px;top:467.00px" width="7" height="6.5" viewBox="0 0 7 6.5"><rect x="0.5" y="2" width="3.8" height="4" fill="none" stroke="#4a6a80" stroke-width="0.8"/><rect x="2.3" y="0.5" width="3.8" height="4" fill="#fff" stroke="#4a6a80" stroke-width="0.8"/></svg>
<div class="t" style="left:305.40px;top:460.80px;width:600px;height:20px;line-height:20px;font-size:7.0px;color:#4e5f6b;text-align:left;">Generar Copia</div>
<div class="a" style="left:360.40px;top:462.80px;width:103.70px;height:14.80px;background:#f0f0f0;border:0.7px solid #e7e7e7"></div>
<svg class="a" style="left:366.30px;top:467.30px" width="6.5" height="5.5" viewBox="0 0 6.5 5.5"><ellipse cx="3.2" cy="2.3" rx="3" ry="2.1" fill="#7f98aa"/><path d="M0.8 5.3L1.8 3.4L3 4Z" fill="#7f98aa"/></svg>
<div class="t" style="left:375.40px;top:460.80px;width:600px;height:20px;line-height:20px;font-size:6.93px;color:#9ca8b0;text-align:left;">Notificar Expediente a TAD</div>
<div class="a" style="left:467.50px;top:462.80px;width:49.80px;height:14.80px;background:#fff;border:0.7px solid #dcdcdc;box-shadow:0.5px 0.8px 0.9px rgba(0,0,0,0.2)"></div>
<svg class="a" style="left:474.50px;top:467.20px" width="6" height="6" viewBox="0 0 6 6"><path d="M1 1L5 5M5 1L1 5" stroke="#1f4f78" stroke-width="1.5"/></svg>
<div class="t" style="left:482.80px;top:460.80px;width:600px;height:20px;line-height:20px;font-size:6.99px;color:#4e5f6b;text-align:left;">Cancelar</div>
</div>
</body></html>
